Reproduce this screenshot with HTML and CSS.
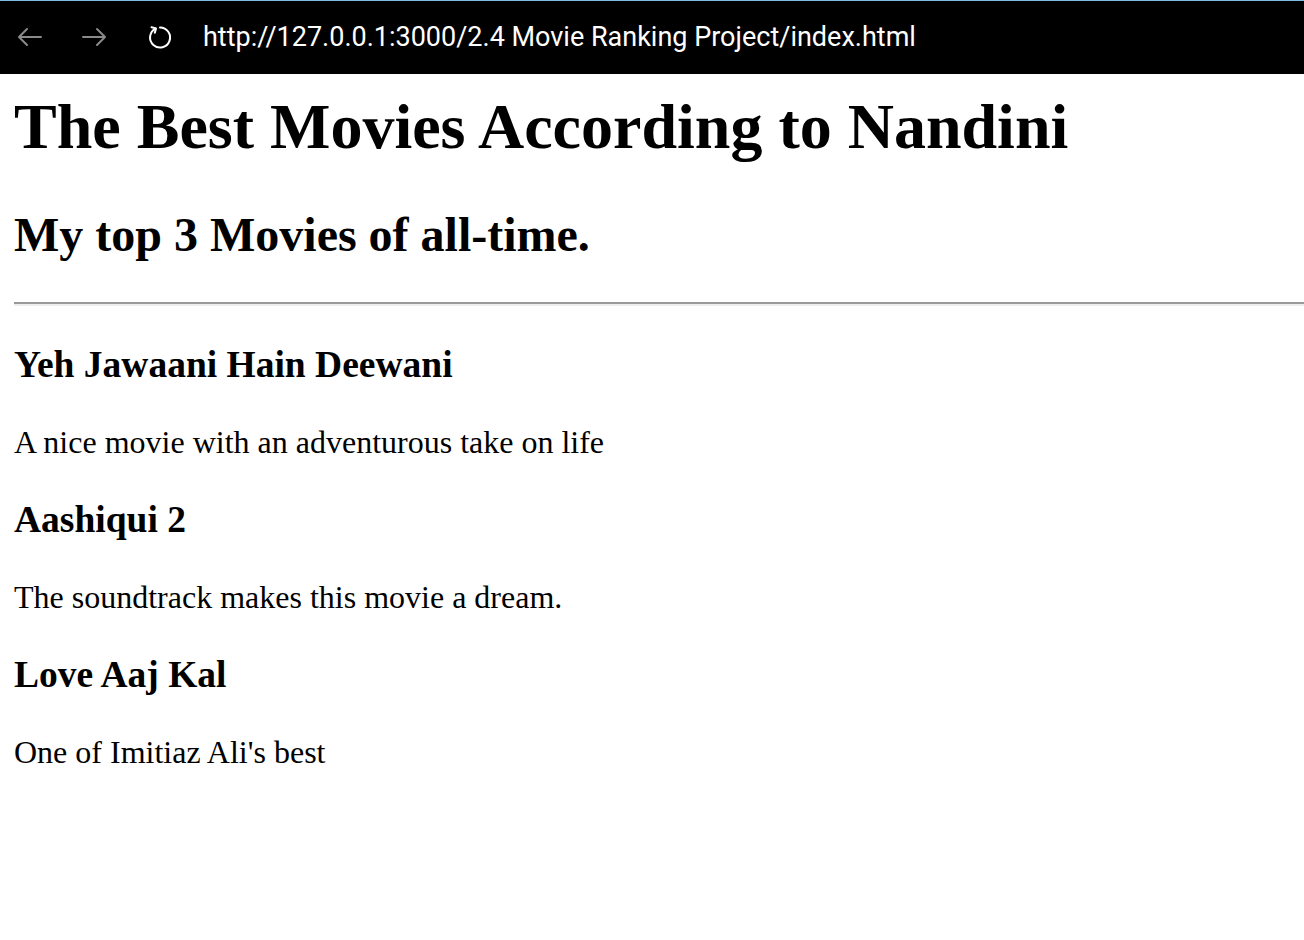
FILE: index.html
```html
<!DOCTYPE html>
<html lang="en">
<head>
<meta charset="utf-8">
<title>The Best Movies According to Nandini</title>
<link rel="stylesheet" href="styles.css">
</head>
<body>
<header class="toolbar">
  <span class="nav-btn nav-back">
    <svg width="26" height="20" viewBox="0 0 26 20"><path d="M24 10H2M10 2L2 10L10 18" fill="none" stroke="#8a8a8a" stroke-width="2" stroke-linecap="round" stroke-linejoin="round"/></svg>
  </span>
  <span class="nav-btn nav-fwd">
    <svg width="26" height="20" viewBox="0 0 26 20"><path d="M2 10H24M16 2L24 10L16 18" fill="none" stroke="#8a8a8a" stroke-width="2" stroke-linecap="round" stroke-linejoin="round"/></svg>
  </span>
  <span class="nav-btn nav-reload">
    <svg width="26" height="26" viewBox="0 0 26 26"><path d="M8.5 4.6A10 10 0 1 0 13 3.5" fill="none" stroke="#ffffff" stroke-width="2" stroke-linecap="round"/><path d="M4.5 3.2L9 4.4L7.8 8.8" fill="none" stroke="#ffffff" stroke-width="2" stroke-linecap="round" stroke-linejoin="round"/></svg>
  </span>
  <span class="url">http://127.0.0.1:3000/2.4 Movie Ranking Project/index.html</span>
</header>
<main class="page">
  <h1 class="title">The Best Movies According to Nandini</h1>
  <h2 class="subtitle">My top 3 Movies of all-time.</h2>
  <hr class="rule">
  <h3 class="movie">Yeh Jawaani Hain Deewani</h3>
  <p class="desc">A nice movie with an adventurous take on life</p>
  <h3 class="movie">Aashiqui 2</h3>
  <p class="desc">The soundtrack makes this movie a dream.</p>
  <h3 class="movie">Love Aaj Kal</h3>
  <p class="desc">One of Imitiaz Ali's best</p>
</main>
</body>
</html>
```

FILE: styles.css
```css
html, body {
  margin: 0;
  padding: 0;
  background: #ffffff;
}

body {
  font-family: "Liberation Serif", "Times New Roman", serif;
  color: #000000;
  overflow: hidden;
}

.toolbar {
  height: 73px;
  background: #000000;
  border-top: 1px solid #7fbbe0;
  display: flex;
  align-items: center;
  padding-left: 17px;
  padding-bottom: 2px;
  box-sizing: border-box;
  height: 74px;
}

.nav-btn {
  display: flex;
  align-items: center;
  justify-content: center;
}

.nav-back { width: 26px; margin-right: 38px; }
.nav-fwd { width: 26px; margin-right: 40px; }
.nav-reload { width: 26px; margin-right: 30px; }

.url {
  font-family: "Roboto", "Inter", sans-serif;
  color: #ffffff;
  font-size: 27px;
}

.page {
  padding: 0 0 0 14px;
  display: flow-root;
}

.title {
  font-size: 64px;
  font-weight: bold;
  margin: 16px 0 43px;
  line-height: 1.15;
}

.subtitle {
  font-size: 48px;
  font-weight: bold;
  margin: 0 0 40px;
  line-height: 1.15;
}

.rule {
  margin: 0;
  border: 0;
  border-top: 2px solid #9a9a9a;
  border-bottom: 2px solid #eeeeee;
  height: 0;
}

.movie {
  font-size: 37.5px;
  font-weight: bold;
  margin: 37.5px 0;
  line-height: 1.15;
}

.desc {
  font-size: 32px;
  margin: 32px 0;
  line-height: 1.15;
}
```
